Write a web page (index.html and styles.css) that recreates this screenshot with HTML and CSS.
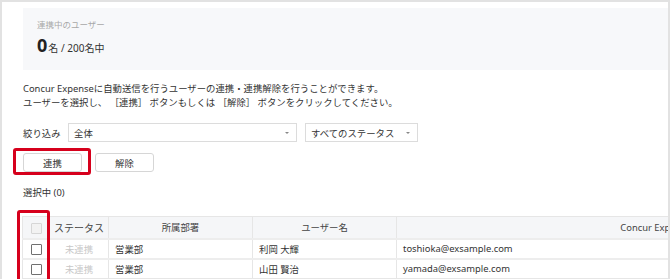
FILE: index.html
```html
<!DOCTYPE html>
<html lang="ja">
<head>
    <meta charset="UTF-8">
    <title>ユーザー連携</title>
    <link rel="stylesheet" href="styles.css">
</head>
<body>
    <div class="frame">
        <div class="summary">
            <div class="summary-label">連携中のユーザー</div>
            <div class="summary-count"><span class="count-num">0</span>名 / 200名中</div>
        </div>

        <p class="intro">
            Concur Expenseに自動送信を行うユーザーの連携・連携解除を行うことができます。<br>
            ユーザーを選択し、 ［連携］ ボタンもしくは ［解除］ ボタンをクリックしてください。
        </p>

        <div class="filter-row">
            <span class="filter-label">絞り込み</span>
            <div class="select select-dept"><span>全体</span><i class="caret"></i></div>
            <div class="select select-status"><span>すべてのステータス</span><i class="caret"></i></div>
        </div>

        <div class="actions">
            <button class="btn">連携</button>
            <button class="btn">解除</button>
            <div class="mark mark-btn"></div>
        </div>

        <div class="selected">選択中 (0)</div>

        <div class="table-wrap">
            <table class="users">
                <thead>
                    <tr>
                        <th class="col-check"><span class="box box-disabled"></span></th>
                        <th class="col-status">ステータス</th>
                        <th class="col-dept">所属部署</th>
                        <th class="col-user">ユーザー名</th>
                        <th class="col-concur">Concur Expense ID</th>
                    </tr>
                </thead>
                <tbody>
                    <tr>
                        <td class="col-check"><span class="box"></span></td>
                        <td class="status">未連携</td>
                        <td>営業部</td>
                        <td>利岡 大輝</td>
                        <td>toshioka@exsample.com</td>
                    </tr>
                    <tr>
                        <td class="col-check"><span class="box"></span></td>
                        <td class="status">未連携</td>
                        <td>営業部</td>
                        <td>山田 賢治</td>
                        <td>yamada@exsample.com</td>
                    </tr>
                </tbody>
            </table>
            <div class="mark mark-col"></div>
        </div>
    </div>
</body>
</html>
```

FILE: styles.css
```css
body {
    margin: 0;
    padding: 0;
    background: #ffffff;
    font-family: "Noto Sans", "Noto Sans CJK JP", sans-serif;
    color: #333333;
    overflow: hidden;
}
.frame {
    width: 670px;
    height: 279px;
    box-sizing: border-box;
    border: 2px solid #e2e2e2;
    border-bottom: none;
    padding: 6px 0 0 21px;
    overflow: hidden;
}
.summary {
    background: #f7f8fa;
    height: 62px;
    padding: 11px 14px 0;
    box-sizing: border-box;
}
.summary-label {
    font-size: 8.5px;
    color: #a8a8a8;
    line-height: 12px;
}
.summary-count {
    margin-top: 4px;
    font-size: 10px;
    line-height: 20px;
}
.count-num {
    font-size: 18px;
    font-weight: bold;
    color: #222222;
    margin-right: 1px;
}
.intro {
    margin: 12px 0 0;
    font-size: 9.4px;
    line-height: 14px;
}
.filter-row {
    display: flex;
    align-items: center;
    margin-top: 13px;
    font-size: 9.4px;
}
.filter-label {
    width: 45px;
}
.select {
    display: flex;
    align-items: center;
    height: 19px;
    box-sizing: border-box;
    border: 1px solid #dcdcdc;
    padding: 0 7px 0 5px;
}
.select-dept {
    width: 229px;
}
.select-status {
    width: 113px;
    margin-left: 8px;
}
.caret {
    margin-left: auto;
    width: 0;
    height: 0;
    border-left: 2px solid transparent;
    border-right: 2px solid transparent;
    border-top: 2px solid #888888;
}
.actions {
    position: relative;
    display: flex;
    gap: 13px;
    margin-top: 11px;
}
.btn {
    width: 59px;
    height: 19px;
    padding: 0;
    background: #ffffff;
    border: 1px solid #d6d6d6;
    border-radius: 3px;
    font-family: inherit;
    font-size: 9.4px;
    color: #333333;
}
.mark {
    position: absolute;
    border: 3px solid #d6001c;
    border-radius: 3px;
}
.mark-btn {
    left: -10px;
    top: -5px;
    width: 72px;
    height: 21px;
}
.selected {
    margin-top: 14px;
    font-size: 9.4px;
    line-height: 14px;
}
.table-wrap {
    position: relative;
    margin-top: 16px;
    margin-left: -1px;
}
.users {
    border-collapse: collapse;
    table-layout: fixed;
    width: 906px;
    font-size: 9.4px;
}
.users th,
.users td {
    box-sizing: border-box;
    border: 1px solid #e6e6e6;
    padding: 0 6px;
    white-space: nowrap;
}
.users th {
    height: 22px;
    background: #f5f6f8;
    font-weight: normal;
    text-align: center;
    color: #444444;
}
.users td {
    height: 20px;
    border-top: 2px solid #ededed;
}
.users .col-check {
    width: 27px;
    padding: 0;
    text-align: center;
}
.users .col-status {
    width: 59px;
    padding: 0 2px;
    font-size: 10px;
}
.users .col-dept,
.users .col-user {
    width: 144px;
}
.users td.status {
    text-align: center;
    color: #c8c8c8;
}
.box {
    display: inline-block;
    width: 9px;
    height: 9px;
    border: 1px solid #707070;
    border-radius: 1px;
    vertical-align: middle;
}
.box-disabled {
    border-color: #d6d6d6;
    background: #f2f2f2;
}
.mark-col {
    left: -5px;
    top: -6px;
    width: 27px;
    height: 90px;
}
```
